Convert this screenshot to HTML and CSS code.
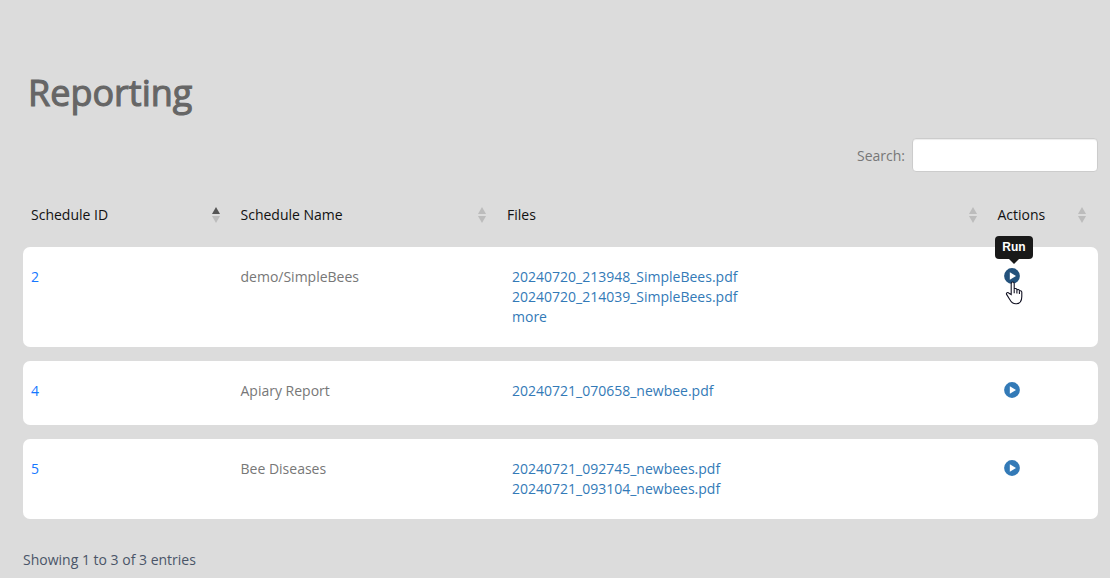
FILE: index.html
```
<!DOCTYPE html>
<html lang="en">
<head>
<meta charset="utf-8">
<title>Reporting</title>
<link rel="stylesheet" href="styles.css">
</head>
<body>

<h1>Reporting</h1>

<div class="filter">
  <label for="search">Search:</label>
  <input type="search" id="search">
</div>

<table id="reportTable">
  <colgroup>
    <col class="col-id">
    <col class="col-name">
    <col class="col-files">
    <col class="col-actions">
  </colgroup>
  <thead>
    <tr>
      <th><div class="head asc">Schedule ID<span class="sort"></span></div></th>
      <th><div class="head">Schedule Name<span class="sort"></span></div></th>
      <th><div class="head">Files<span class="sort"></span></div></th>
      <th><div class="head">Actions<span class="sort"></span></div></th>
    </tr>
  </thead>
  <tbody>
    <tr>
      <td class="id">2</td>
      <td>demo/SimpleBees</td>
      <td class="files">
        <a href="#">20240720_213948_SimpleBees.pdf</a>
        <a href="#">20240720_214039_SimpleBees.pdf</a>
        <a href="#">more</a>
      </td>
      <td class="actions">
        <a href="#" class="run active">
          <svg width="16" height="16" viewBox="0 0 16 16"><circle cx="8" cy="8" r="7.9"/><path d="M5.8 4.2v7.6l6.2-3.8z"/></svg>
          <span class="tooltip">Run</span>
          <svg class="pointer" width="18" height="24" viewBox="0 0 18 24"><path d="M6.2 13.5V2.7c0-2.2 3-2.2 3 0v5.8c.3-1.5 2.7-1.3 2.7.3v.5c.4-1.2 2.5-1 2.5.5v.6c.5-1 2.4-.8 2.4.8v4.2c0 4.4-2.2 7.4-6 7.4-3.2 0-4.6-1.7-6.2-4.6l-3-4.8c-.8-1.7 1.2-2.5 2.4-1.2z"/><path d="M9.2 8.5v3.8M11.9 9.3v3.3M14.4 10.4v2.6"/></svg>
        </a>
      </td>
    </tr>
    <tr class="single">
      <td class="id">4</td>
      <td>Apiary Report</td>
      <td class="files">
        <a href="#">20240721_070658_newbee.pdf</a>
      </td>
      <td class="actions">
        <a href="#" class="run"><svg width="16" height="16" viewBox="0 0 16 16"><circle cx="8" cy="8" r="7.9"/><path d="M5.8 4.2v7.6l6.2-3.8z"/></svg></a>
      </td>
    </tr>
    <tr>
      <td class="id">5</td>
      <td>Bee Diseases</td>
      <td class="files">
        <a href="#">20240721_092745_newbees.pdf</a>
        <a href="#">20240721_093104_newbees.pdf</a>
      </td>
      <td class="actions">
        <a href="#" class="run"><svg width="16" height="16" viewBox="0 0 16 16"><circle cx="8" cy="8" r="7.9"/><path d="M5.8 4.2v7.6l6.2-3.8z"/></svg></a>
      </td>
    </tr>
  </tbody>
</table>

<div class="info">Showing 1 to 3 of 3 entries</div>

</body>
</html>
```
FILE: styles.css
```
* {
  box-sizing: border-box;
}

body {
  margin: 0;
  padding: 73px 12px 0 23px;
  height: 578px;
  overflow: hidden;
  background-color: #dcdcdc;
  color: #777;
  font-family: "Open Sans", sans-serif;
  font-size: 14px;
  line-height: 20px;
}

h1 {
  margin: 0 0 25px 5px;
  color: #666;
  font-size: 36px;
  font-weight: 400;
  line-height: 40px;
  -webkit-text-stroke: 1.1px #666;
}

.filter {
  display: flex;
  justify-content: flex-end;
  align-items: center;
  gap: 7px;
}

.filter label {
  padding-top: 2px;
}

.filter input {
  width: 186px;
  height: 34px;
  padding: 5px 10px;
  border: 1px solid #ccc;
  border-radius: 4px;
  background-color: #fff;
  box-shadow: inset 0 1px 1px rgba(0, 0, 0, 0.075);
}

table {
  width: 1075px;
  margin-top: 11px;
  table-layout: fixed;
  border-collapse: separate;
  border-spacing: 0 14px;
}

.col-id { width: 209.5px; }
.col-name { width: 266.5px; }
.col-files { width: 490.5px; }
.col-actions { width: 108.5px; }

th {
  padding: 8px;
  color: #111;
  font-weight: 400;
  text-align: left;
}

.head {
  display: flex;
  justify-content: space-between;
  align-items: center;
}

/* sort arrows */
.sort {
  display: flex;
  flex-direction: column;
  gap: 2px;
  margin: 0 4.6px 0 0;
}

th:last-child .sort {
  margin-right: 4px;
}

.sort::before,
.sort::after {
  content: "";
  border: 4px solid transparent;
}

.sort::before {
  border-top: 0;
  border-bottom: 7px solid #bcbcbc;
}

.sort::after {
  border-bottom: 0;
  border-top: 7px solid #bcbcbc;
}

.asc .sort::before {
  border-bottom-color: #555;
}

td {
  padding: 20px 8px;
  background-color: #fff;
  vertical-align: top;
}

td:first-child {
  border-radius: 7px 0 0 7px;
}

td:last-child {
  border-radius: 0 7px 7px 0;
}

.single {
  height: 64px;
}

.id {
  color: #1677ff;
}

a {
  color: #337ab7;
  text-decoration: none;
}

.files {
  padding-left: 13px;
}

.files a {
  display: block;
}

.actions {
  padding-left: 14.5px;
}

.run {
  position: relative;
  display: block;
  width: 16px;
  height: 20px;
  padding-top: 1px;
}

.run svg {
  display: block;
}

.run circle {
  fill: #337ab7;
}

.run path {
  fill: #fff;
}

.active circle {
  fill: #23527c;
}

.tooltip {
  position: absolute;
  left: -9px;
  top: -31px;
  width: 38px;
  height: 23px;
  border-radius: 4px;
  background-color: #191919;
  color: #fff;
  font: bold 12px/22px "Liberation Sans", Arial, sans-serif;
  text-align: center;
}

.tooltip::after {
  content: "";
  position: absolute;
  left: 14px;
  top: 23px;
  border: 5px solid transparent;
  border-top-color: #191919;
  border-bottom: 0;
}

.run .pointer {
  position: absolute;
  left: 1px;
  top: 14px;
}

.pointer path {
  stroke: #112;
  stroke-width: 1.1;
}

.info {
  margin-top: 17px;
  color: #4a5568;
}
```
